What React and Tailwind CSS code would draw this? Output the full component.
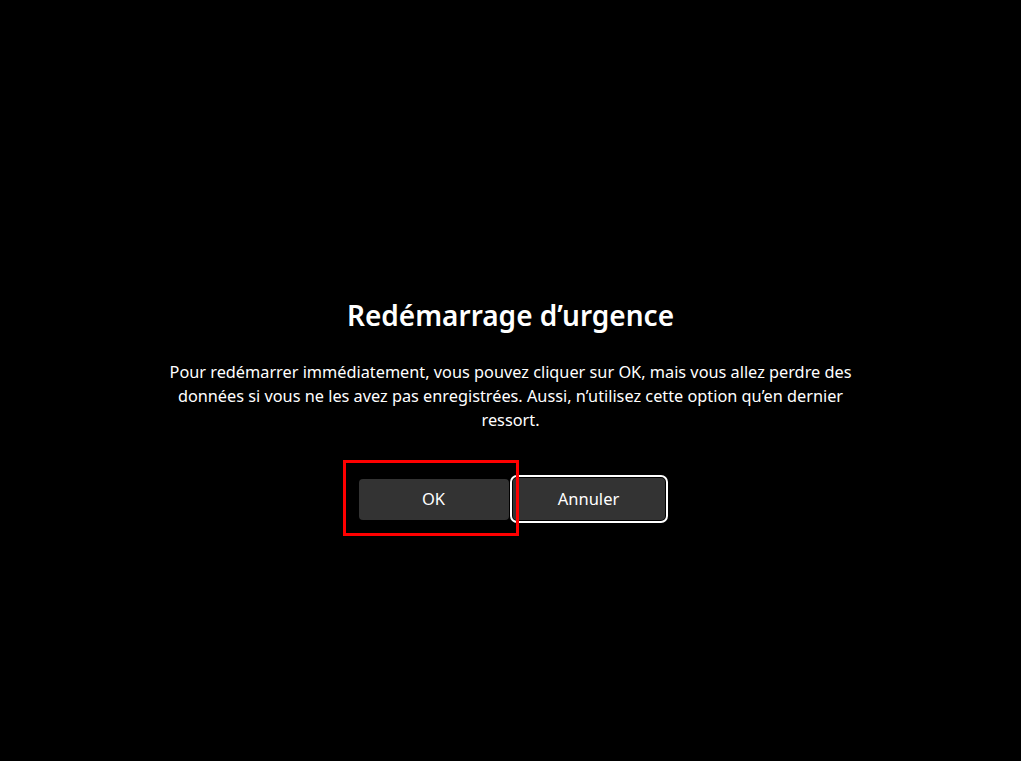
export default function App() {
  return (
    <div
      className="min-h-[761px] w-full bg-black text-white flex flex-col items-center pt-[296px]"
      style={{ fontFamily: '"Noto Sans", "Open Sans", sans-serif' }}
    >
      <h1 className="text-[28px] font-semibold leading-[38px]">
        Redémarrage d’urgence
      </h1>

      <p className="mt-[26px] w-[710px] text-center text-[16.3px] leading-[24px]">
        Pour redémarrer immédiatement, vous pouvez cliquer sur OK, mais vous
        allez perdre des données si vous ne les avez pas enregistrées. Aussi,
        n’utilisez cette option qu’en dernier ressort.
      </p>

      <div className="mt-[46px] ml-[2px] flex items-center gap-[4px]">
        {/* OK button, highlighted with red frame */}
        <div className="relative">
          <button className="w-[150px] h-[41px] rounded-[4px] bg-[#333333] text-[16.5px]">
            OK
          </button>
          <div className="pointer-events-none absolute -left-[16px] -right-[10px] -top-[19px] -bottom-[16px] border-[3px] border-[#ff0000] z-10" />
        </div>

        {/* Annuler button with focus ring */}
        <div className="relative">
          <button className="w-[152px] h-[42px] rounded-[4px] bg-[#333333] text-[16.5px]">
            Annuler
          </button>
          <div className="pointer-events-none absolute -inset-[3px] rounded-[7px] border-[2px] border-white" />
        </div>
      </div>
    </div>
  );
}
